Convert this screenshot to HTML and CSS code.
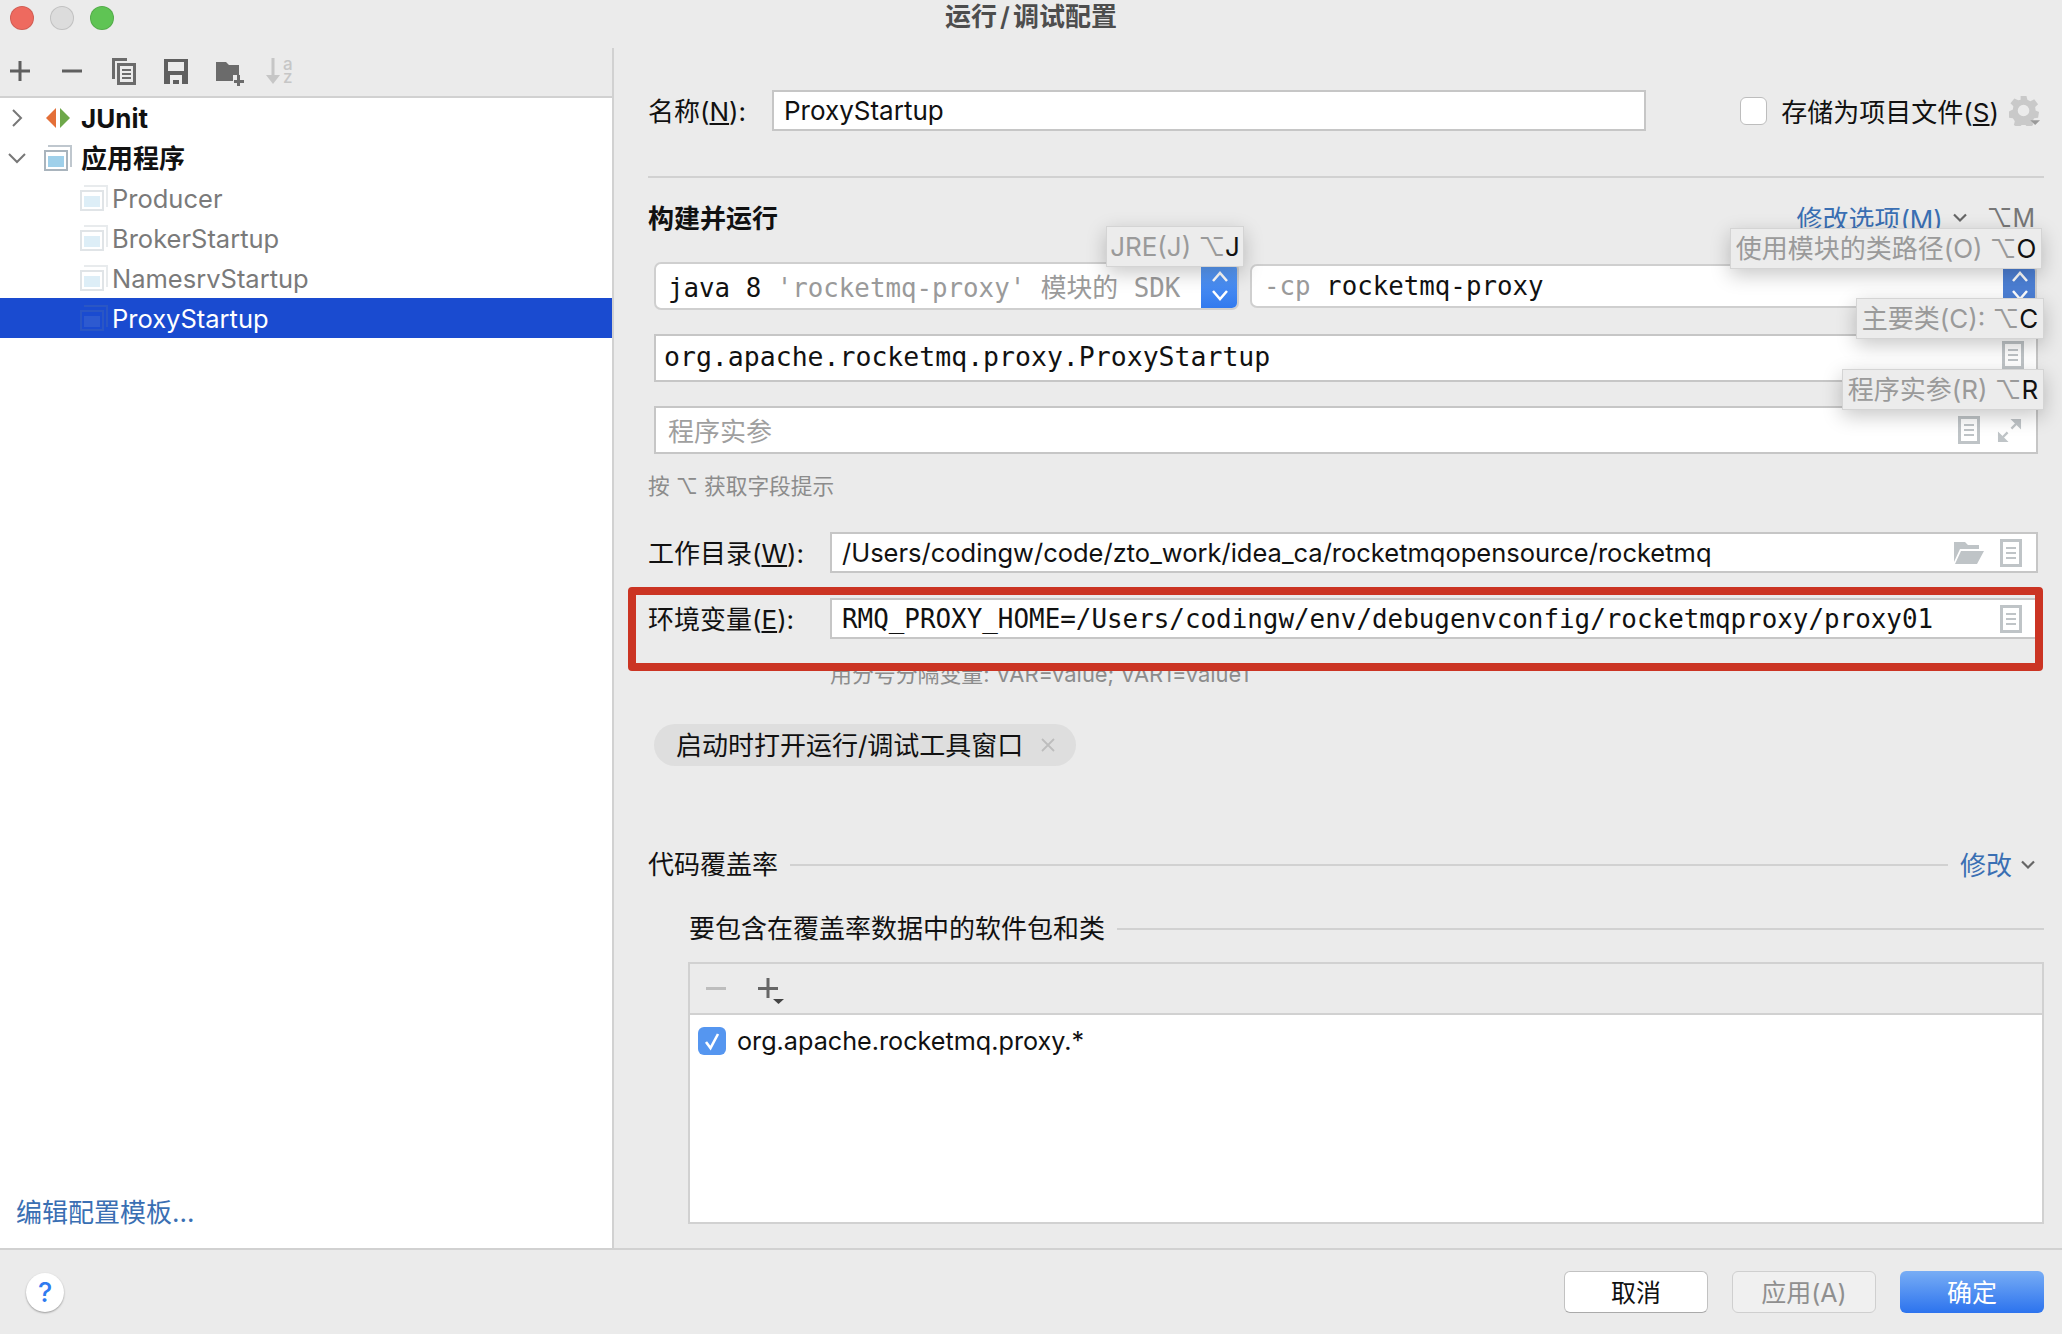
FILE: index.html
```html
<!DOCTYPE html>
<html lang="zh">
<head>
<meta charset="utf-8">
<title>运行/调试配置</title>
<link rel="stylesheet" href="styles.css">
</head>
<body>
<svg class="sprite" width="0" height="0" aria-hidden="true">
  <symbol id="doc" viewBox="0 0 22 28">
    <path fill="#bfc4c7" d="M0 0h22v28H0z"/><path fill="#fff" d="M3 3h16v22H3z"/>
    <path fill="#bfc4c7" d="M6 8h10v2H6zM6 13h10v2H6zM6 18h10v2H6z"/>
  </symbol>
  <symbol id="app" viewBox="0 0 28 26">
    <path fill="currentColor" opacity=".75" d="M4 0h24v22h-2V2H4z"/>
    <path fill="currentColor" d="M0 5h24v21H0z"/>
    <path fill="#fff" d="M2 7h20v17H2z"/>
    <path fill="#9fd0ea" d="M4 11h16v11H4z"/>
  </symbol>
  <symbol id="appsel" viewBox="0 0 28 26">
    <path fill="#2a56c4" d="M4 0h24v22h-2V2H4z"/>
    <path fill="#2a56c4" d="M0 5h24v21H0z"/>
    <path fill="#1a4bd0" d="M2 7h20v17H2z"/>
    <path fill="#2d5ad0" d="M4 11h16v11H4z"/>
  </symbol>
</svg>

<div class="window">
  <header class="titlebar">
    <div class="lights"><span class="light red"></span><span class="light grey"></span><span class="light green"></span></div>
    <div class="title">运行 / 调试配置</div>
  </header>

  <div class="body">
    <aside class="side">
      <div class="toolbar">
        <svg class="tool" viewBox="0 0 28 28"><path fill="#5f5f5f" d="M4 12.500h20v3H4zM12.500 4h3v20h-3z"/></svg>
        <svg class="tool" viewBox="0 0 28 28"><path fill="#5f5f5f" d="M4 12.500h20v3H4z"/></svg>
        <svg class="tool" viewBox="0 0 28 28"><path fill="#6b6b6b" d="M2 1h15v3H5v18H2zM7 6h19v22H7zM10 9v16h13V9zM12 12h9v2h-9zM12 16h9v2h-9zM12 20h9v2h-9z" fill-rule="evenodd"/></svg>
        <svg class="tool" viewBox="0 0 28 28"><path fill="#5f5f5f" fill-rule="evenodd" d="M2 2h24v25H2zM6 5v9h16V5zM8 18v9h12v-9zM11 23h6v4h-6z"/></svg>
        <svg class="tool" viewBox="-2 -1 28 28"><path fill="#6b6b6b" d="M0 4h10l3 3h10v10h-6v6H0z"/><path fill="#6b6b6b" d="M21 17h3v5h4v3h-4v3h-3v-3h-3v-3h3z"/></svg>
        <div class="sort">
          <svg class="sort-arrow" viewBox="0 0 14 26"><path fill="#c6c6c6" d="M5.500 0h3v17H14l-7 9-7-9h5.500z"/></svg>
          <div class="sort-letters"><span>a</span><span>z</span></div>
        </div>
      </div>

      <div class="tree">
        <div class="row top">
          <svg class="chev" viewBox="0 0 18 18"><path fill="none" stroke="#777" stroke-width="2" d="M5 1l8 8-8 8"/></svg>
          <svg class="junit" viewBox="0 0 24 20"><path fill="#e46f38" d="M10 0v20L0 10z"/><path fill="#6ea84a" d="M14 0v20l10-10z"/></svg>
          <b class="rowtext strong">JUnit</b>
        </div>
        <div class="row top">
          <svg class="chev" viewBox="0 0 18 18"><path fill="none" stroke="#777" stroke-width="2" d="M1 5l8 8 8-8"/></svg>
          <svg class="appicon group"><use href="#app"/></svg>
          <b class="rowtext strong">应用程序</b>
        </div>
        <div class="row child"><svg class="appicon faded"><use href="#app"/></svg><span class="rowtext muted">Producer</span></div>
        <div class="row child"><svg class="appicon faded"><use href="#app"/></svg><span class="rowtext muted">BrokerStartup</span></div>
        <div class="row child"><svg class="appicon faded"><use href="#app"/></svg><span class="rowtext muted">NamesrvStartup</span></div>
        <div class="row child selected"><svg class="appicon"><use href="#appsel"/></svg><span class="rowtext">ProxyStartup</span></div>
      </div>

      <a class="link template">编辑配置模板...</a>
    </aside>

    <main class="main">
      <div class="name-row">
        <label class="name-label">名称(<u>N</u>):</label>
        <div class="field name-field">ProxyStartup</div>
        <div class="store">
          <span class="check"></span>
          <span class="store-text">存储为项目文件(<u>S</u>)</span>
          <svg class="gear" viewBox="0 0 32 32"><path fill="#c9c9c9" fill-rule="evenodd" d="M12 1h6l1 4 3 1.500 4-2 4 5-3 3 .5 3.500 3.500 1.500-1 6-4 .5-2 3 1 4-5 3-3-3h-4l-3 3-5-3 1-4-2-3-4-.5-1-6L4 15l.5-3.500-3-3 4-5 4 2L12 5zM15 10a6 6 0 100 12 6 6 0 000-12z"/><path fill="#9a9a9a" d="M22 26h10l-5 5z"/></svg>
        </div>
      </div>

      <div class="sep"></div>

      <div class="heading-row">
        <strong class="heading">构建并运行</strong>
        <div class="options">
          <span class="link opt-link">修改选项(M)</span>
          <svg class="small-chev" viewBox="0 0 16 10"><path fill="none" stroke="#666" stroke-width="2.200" d="M2 1.500l6 6 6-6"/></svg>
          <span class="shortcut">⌥M</span>
        </div>
      </div>

      <div class="combo-row">
        <div class="combo jre">
          <span class="combo-text">java 8 <span class="mono-muted">'rocketmq-proxy' 模块的 SDK</span></span>
          <span class="spin"><svg viewBox="0 0 20 34"><path fill="none" stroke="#fff" stroke-width="2.500" d="M3 12l7-8 7 8M3 22l7 8 7-8"/></svg></span>
        </div>
        <div class="combo cp">
          <span class="combo-text"><span class="mono-muted">-cp</span> rocketmq-proxy</span>
          <span class="spin dim"><svg viewBox="0 0 20 34"><path fill="none" stroke="#fff" stroke-width="2.500" d="M3 12l7-8 7 8M3 22l7 8 7-8"/></svg></span>
        </div>
      </div>

      <div class="field wide main-class">
        <span class="mono-line">org.apache.rocketmq.proxy.ProxyStartup</span>
        <svg class="doc doc-up"><use href="#doc"/></svg>
      </div>

      <div class="field wide args">
        <span class="placeholder">程序实参</span>
        <svg class="doc"><use href="#doc"/></svg>
        <svg class="expand" viewBox="0 0 26 26"><path fill="#bfc4c7" d="M14 1h11v11zM1 14v11h11z"/><path fill="none" stroke="#bfc4c7" stroke-width="2.500" d="M20 6l-5 5M6 20l5-5"/></svg>
      </div>

      <div class="hint">按 ⌥ 获取字段提示</div>

      <div class="label-row work">
        <label class="row-label">工作目录(<u>W</u>):</label>
        <div class="field grow path">
          <span>/Users/codingw/code/zto_work/idea_ca/rocketmqopensource/rocketmq</span>
          <svg class="folder" viewBox="0 0 30 22"><path fill="#bfc4c7" d="M0 20V0h11l3 3h11v4H6zM1 22l6-13h23l-7 13z"/></svg>
          <svg class="doc near"><use href="#doc"/></svg>
        </div>
      </div>

      <div class="label-row env">
        <label class="row-label">环境变量(<u>E</u>):</label>
        <div class="field grow path">
          <span class="mono-line env-value">RMQ_PROXY_HOME=/Users/codingw/env/debugenvconfig/rocketmqproxy/proxy01</span>
          <svg class="doc push"><use href="#doc"/></svg>
        </div>
      </div>

      <div class="env-hint">用分号分隔变量: VAR=value; VAR1=value1</div>

      <div class="chip"><span class="lift">启动时打开运行/调试工具窗口</span>
        <svg class="chip-x" viewBox="0 0 16 16"><path fill="none" stroke="#bdbdbd" stroke-width="1.800" d="M2 2l12 12M14 2L2 14"/></svg>
      </div>

      <div class="cov-head">
        <span class="cov-title">代码覆盖率</span>
        <span class="rule"></span>
        <span class="link cov-link">修改</span>
        <svg class="small-chev" viewBox="0 0 16 10"><path fill="none" stroke="#666" stroke-width="2.200" d="M2 1.500l6 6 6-6"/></svg>
      </div>

      <div class="cov-sub">
        <span class="cov-title">要包含在覆盖率数据中的软件包和类</span>
        <span class="rule"></span>
      </div>

      <div class="pkg-box">
        <div class="pkg-tools">
          <svg class="pkg-minus" viewBox="0 0 20 4"><path fill="#bdbdbd" d="M0 0h20v3H0z"/></svg>
          <svg class="pkg-plus" viewBox="0 0 26 26"><path fill="#666" d="M0 9h20v3H0zM8.500 0h3v20h-3z"/><path fill="#444" d="M15 21h11l-5.500 5z"/></svg>
        </div>
        <div class="pkg-list">
          <div class="pkg-item">
            <span class="checked"><svg viewBox="0 0 28 28"><path fill="none" stroke="#fff" stroke-width="2.600" d="M8 15l4.500 6L20 7"/></svg></span>
            <span>org.apache.rocketmq.proxy.*</span>
          </div>
        </div>
      </div>
    </main>
  </div>

  <footer class="footer">
    <span class="help">?</span>
    <button class="btn">取消</button>
    <button class="btn disabled">应用(A)</button>
    <button class="btn primary">确定</button>
  </footer>

  <div class="redbox"></div>
  <div class="tip tip-jre">JRE(J) ⌥<span class="key">J</span></div>
  <div class="tip tip-cp">使用模块的类路径(O) ⌥<span class="key">O</span></div>
  <div class="tip tip-main">主要类(C): ⌥<span class="key">C</span></div>
  <div class="tip tip-args">程序实参(R) ⌥<span class="key">R</span></div>
</div>
</body>
</html>
```

FILE: styles.css
```css
* { box-sizing: border-box; }
html, body { margin: 0; padding: 0; }
body {
  background: #ebebeb;
  color: #111;
  font-family: "Inter", "Noto Sans CJK SC", "DejaVu Sans", sans-serif;
  font-size: 26px;
}
.sprite { position: absolute; }
.window { position: relative; width: 2062px; height: 1334px; display: flex; flex-direction: column; overflow: hidden; }

.titlebar { height: 48px; flex: none; position: relative; display: flex; align-items: flex-start; justify-content: center; }
.lights { position: absolute; left: 10px; top: 6px; display: flex; gap: 16px; }
.light { width: 24px; height: 24px; border-radius: 50%; border: 1px solid rgba(0,0,0,.12); }
.red { background: #ee6a5f; }
.grey { background: #dcdcdc; }
.green { background: #5fc454; }
.title { color: #4d4d4d; font-weight: 600; font-size: 26px; line-height: 34px; word-spacing: -3.500px; }

.body { flex: 1; display: flex; min-height: 0; }
.side { width: 614px; flex: none; border-right: 2px solid #d1d1d1; display: flex; flex-direction: column; background: #fff; }
.toolbar { height: 50px; flex: none; background: #ebebeb; border-bottom: 2px solid #d1d1d1; display: flex; align-items: center; gap: 24px; padding: 0 0 2px 6px; }
.tool { width: 28px; height: 28px; overflow: visible; }
.sort { width: 28px; height: 28px; display: flex; gap: 3px; }
.sort-arrow { width: 14px; height: 26px; margin-top: 1px; flex: none; }
.sort-letters { display: flex; flex-direction: column; color: #c6c6c6; font-size: 17px; line-height: 13px; font-weight: 500; padding-top: 1px; }

.tree { flex: 1; }
.row { height: 40px; display: flex; align-items: center; }
.top { padding-left: 12px; }
.child { padding-left: 80px; }
.chev { width: 18px; height: 18px; flex: none; margin-right: 20px; margin-left: -4px; }
.junit { width: 24px; height: 20px; margin-right: 11px; flex: none; }
.appicon { width: 28px; height: 26px; flex: none; margin-right: 4px; }
.group { color: #a9b4bd; margin-left: -2px; margin-right: 9px; }
.faded { color: #a9b4bd; opacity: .35; }
.rowtext { font-size: 25.500px; line-height: 40px; padding-top: 2px; }
.strong { font-size: 26px; }
.muted { color: #7a7a7a; }
.selected { background: #1a4bd0; color: #fff; }
.link { color: #3a6fb3; }
.template { padding: 0 0 19px 16px; font-size: 26px; line-height: 32px; }

.main { flex: 1; min-width: 0; padding: 42px 18px 0 34px; }
.name-row { height: 41px; display: flex; align-items: center; }
.name-label { width: 124px; flex: none; font-size: 26px; padding-bottom: 2px; }
.field { background: #fff; border: 2px solid #c6c6c6; display: flex; align-items: center; white-space: nowrap; }
.name-field { width: 874px; height: 41px; padding-left: 10px; }
.store { margin-left: auto; display: flex; align-items: center; padding-right: 4px; }
.check { width: 27px; height: 28px; background: #fff; border: 1px solid #bdbdbd; border-radius: 6px; margin-right: 14px; }
.store-text { font-size: 26px; margin-right: 10px; }
.gear { width: 31px; height: 31px; }

.sep { height: 2px; background: #d1d1d1; margin-top: 45px; }
.heading-row { height: 30px; margin-top: 25px; display: flex; justify-content: space-between; align-items: center; }
.heading { font-size: 26px; font-weight: 700; padding-bottom: 3px; }
.options { display: flex; align-items: center; padding-right: 9px; }
.opt-link { padding-bottom: 2px; }
.small-chev { width: 16px; height: 10px; margin-left: 9px; }
.shortcut { margin-left: 19px; color: #777; font-size: 25px; }

.combo-row { margin-top: 29px; height: 48px; margin-left: 6px; margin-right: 7px; display: flex; align-items: center; gap: 11px; }
.combo { background: #fff; border: 2px solid #cfcfcf; border-radius: 7px; display: flex; align-items: center; justify-content: space-between; overflow: hidden; }
.jre { width: 585px; height: 48px; padding-left: 12px; }
.cp { flex: 1; height: 44px; padding-left: 12px; }
.combo-text { font-family: "DejaVu Sans Mono", "Noto Sans CJK SC", monospace; font-size: 25.800px; white-space: pre; padding-bottom: 2px; }
.cp .combo-text { padding-bottom: 0; }
.mono-muted { color: #9a9a9a; }
.spin { width: 38px; align-self: stretch; margin: -2px -2px -2px 0; background: linear-gradient(#5f9ff6, #2f78ee); display: flex; align-items: center; justify-content: center; }
.spin svg { width: 20px; height: 34px; }
.dim { width: 34px; background: #4d80d6; }

.wide { margin-left: 6px; margin-right: 6px; }
.main-class { margin-top: 24px; height: 48px; padding: 0 12px 0 8px; justify-content: space-between; }
.mono-line { font-family: "DejaVu Sans Mono", monospace; font-size: 26.500px; padding-bottom: 3px; }
.env-value { font-size: 25.900px; padding-bottom: 0; }
.args { margin-top: 24px; height: 48px; padding: 0 14px 0 12px; }
.placeholder { color: #9f9f9f; font-size: 26px; margin-right: auto; padding-bottom: 2px; }
.doc { width: 22px; height: 28px; flex: none; }
.doc-up { margin-bottom: 6px; }
.expand { width: 25px; height: 25px; margin-left: 17px; flex: none; }
.hint { height: 28px; margin-top: 19px; color: #8c8c8c; font-size: 21.700px; line-height: 26px; }

.label-row { display: flex; align-items: center; height: 41px; margin-right: 6px; }
.work { margin-top: 31px; }
.env { margin-top: 25px; }
.row-label { width: 182px; flex: none; font-size: 26px; padding-bottom: 2px; }
.grow { flex: 1; min-width: 0; height: 41px; }
.path { padding: 0 14px 0 10px; font-size: 25.500px; }
.folder { width: 30px; height: 22px; margin-left: auto; flex: none; }
.near { margin-left: 16px; }
.push { margin-left: auto; }
.env-hint { height: 28px; margin-top: 23px; padding-left: 182px; color: #8c8c8c; font-size: 21.900px; line-height: 24px; }

.chip { margin-top: 34px; margin-left: 6px; width: 422px; height: 42px; border-radius: 21px; background: #dedede; display: flex; align-items: center; padding-left: 22px; white-space: nowrap; }
.lift { padding-bottom: 4px; }
.chip-x { width: 16px; height: 16px; margin-left: auto; margin-right: 20px; }

.cov-head { height: 28px; margin-top: 85px; display: flex; align-items: center; }
.cov-sub { height: 28px; margin-top: 36px; margin-left: 41px; display: flex; align-items: center; }
.cov-title { white-space: nowrap; padding-bottom: 6px; }
.cov-link { padding-bottom: 4px; }
.rule { flex: 1; height: 2px; background: #d1d1d1; margin: 0 12px; }
.cov-head .small-chev { margin-right: 8px; margin-left: 8px; }
.cov-sub .rule { margin-right: 0; }

.pkg-box { margin-top: 19px; margin-left: 40px; height: 262px; border: 2px solid #d1d1d1; display: flex; flex-direction: column; }
.pkg-tools { height: 51px; flex: none; border-bottom: 2px solid #d1d1d1; display: flex; align-items: center; padding-left: 16px; position: relative; }
.pkg-minus { width: 20px; height: 4px; }
.pkg-plus { width: 26px; height: 26px; margin-left: 32px; margin-top: 4px; }
.pkg-list { flex: 1; background: #fff; padding: 12px 0 0 8px; }
.pkg-item { display: flex; align-items: center; height: 28px; gap: 11px; font-size: 25.200px; }
.checked { width: 28px; height: 28px; border-radius: 6px; background: #5596f0; display: block; }
.checked svg { display: block; width: 28px; height: 28px; }

.footer { height: 86px; flex: none; border-top: 2px solid #d1d1d1; display: flex; align-items: center; gap: 24px; padding: 0 18px 0 26px; }
.help { width: 38px; height: 39px; margin-right: auto; border-radius: 50%; background: #fff; box-shadow: 0 1px 2px rgba(0,0,0,.35); color: #2f7bf0; font-size: 27px; font-weight: 500; display: flex; align-items: center; justify-content: center; }
.btn { width: 144px; height: 42px; border-radius: 6px; border: 1px solid #c2c2c2; border-bottom-color: #aaa; background: #fff; color: #111; font: inherit; font-size: 25px; padding: 0 0 2px; }
.disabled { background: #f0f0f0; border-color: #cfcfcf; color: #8f8f8f; }
.primary { border: none; color: #fff; background: linear-gradient(#78adf5, #2c73ee); }

.redbox { position: absolute; left: 628px; top: 587px; width: 1415px; height: 84px; border: 8px solid #cb3423; border-radius: 4px; }
.tip { position: absolute; height: 41px; background: #ececec; border: 1px solid #d4d4d4; box-shadow: 0 6px 20px rgba(0,0,0,.22); color: #9a9a9a; font-size: 26px; line-height: 40px; text-align: center; white-space: nowrap; }
.key { color: #111; }
.tip-jre { left: 1106px; top: 226px; width: 138px; }
.tip-cp { left: 1730px; top: 228px; width: 312px; }
.tip-main { left: 1856px; top: 298px; width: 188px; }
.tip-args { left: 1842px; top: 369px; width: 202px; }
```
